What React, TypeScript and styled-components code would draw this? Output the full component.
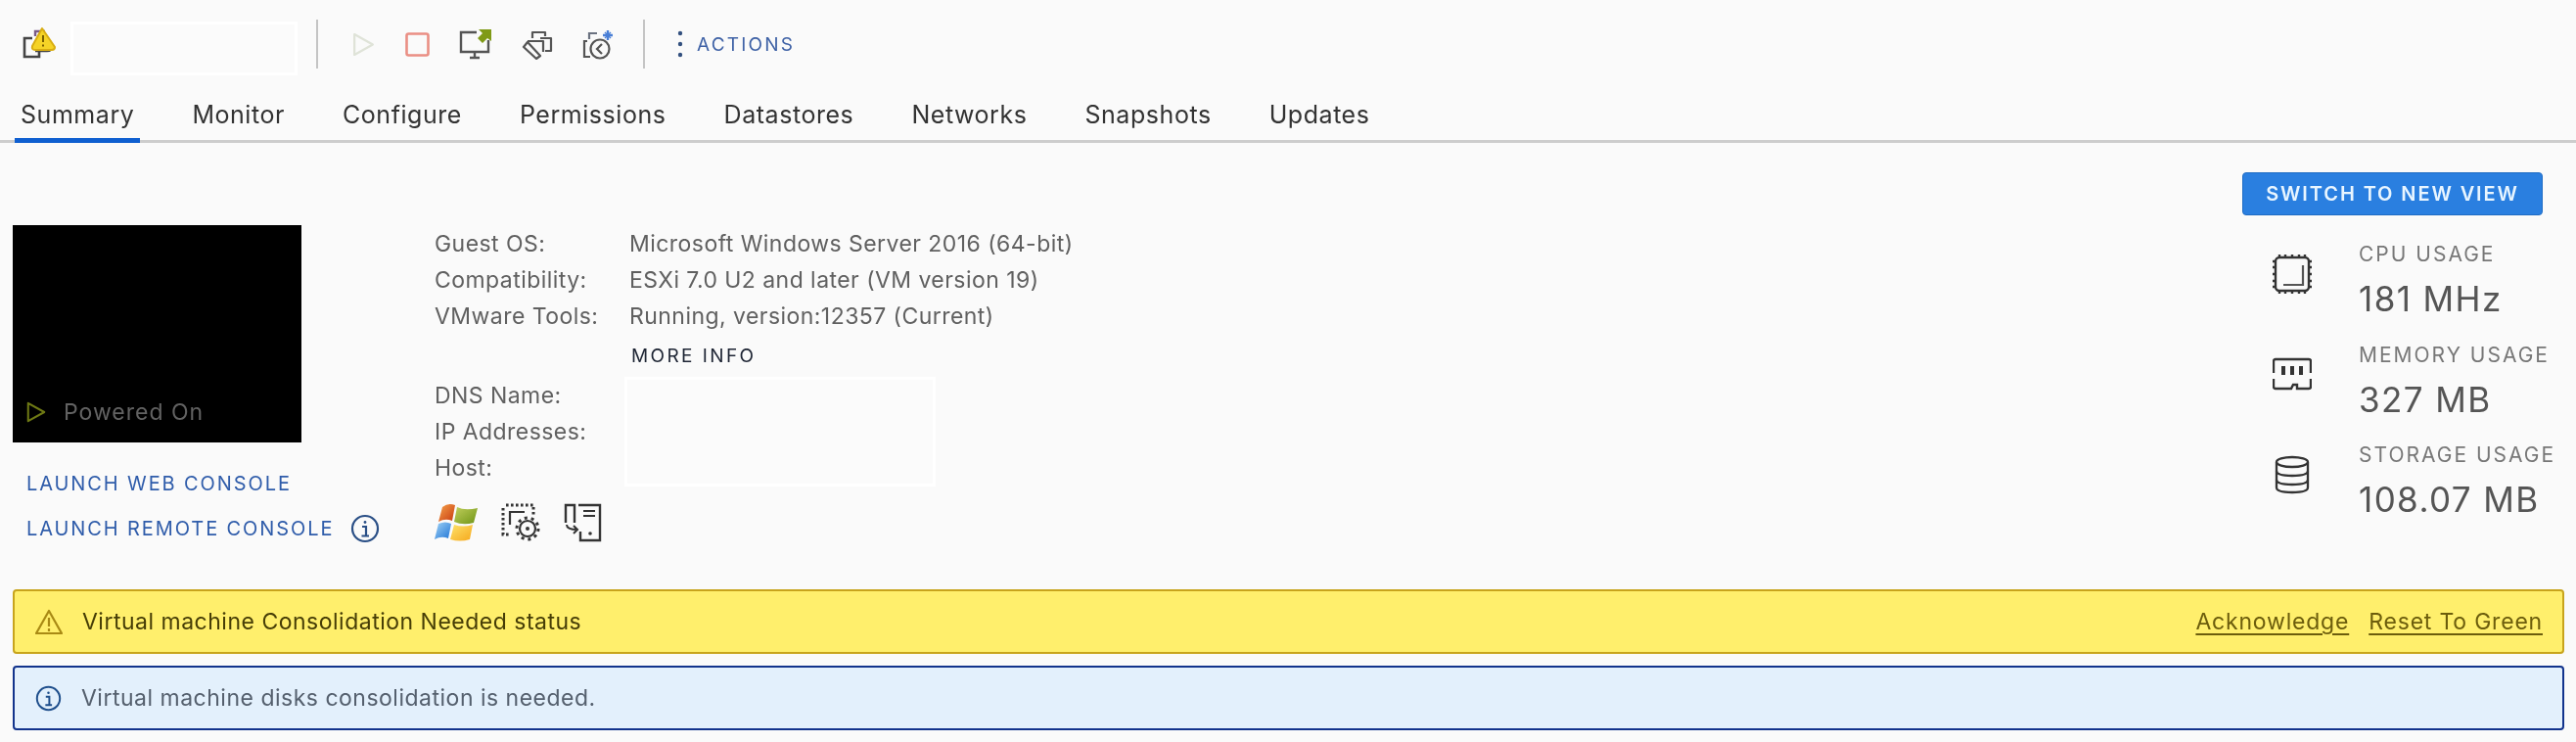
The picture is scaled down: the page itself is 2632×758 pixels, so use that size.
import React from 'react'
import styled, { createGlobalStyle } from 'styled-components'

const GlobalStyle = createGlobalStyle`
  html, body {
    margin: 0;
    padding: 0;
    background: #fafafa;
  }
  body {
    font-family: Inter, "Open Sans", sans-serif;
    color: #565656;
  }
`

// the reference is a soft video capture, so everything is slightly blurred
const Page = styled.div`
  width: 2632px;
  height: 758px;
  overflow: hidden;
  background: #fafafa;
  display: flex;
  flex-direction: column;
  filter: blur(0.5px);
`

const Toolbar = styled.div`
  display: flex;
  align-items: center;
  height: 50px;
  margin-top: 20px;
  padding-left: 22px;
`

const TitleBlank = styled.div`
  box-sizing: border-box;
  width: 232px;
  height: 55px;
  margin: 9px 19px 0 14px;
  background: #fbfbfb;
  border: 3px solid #ffffff;
`

const Separator = styled.div`
  width: 2px;
  height: 50px;
  background: #c4c4c4;
`

const ToolIcons = styled.div`
  display: flex;
  align-items: center;
  width: 332px;
  padding-left: 34px;
  box-sizing: border-box;
  gap: 30px;
`

const ActionsButton = styled.div`
  display: flex;
  align-items: center;
  gap: 14px;
  margin-left: 33px;
  font-size: 19px;
  letter-spacing: 2.2px;
  color: #3f62a6;
`

const TabBar = styled.div`
  display: flex;
  height: 73px;
  padding-left: 15px;
  gap: 47px;
  border-bottom: 3px solid #cdcdcd;
`

const Tab = styled.div<{ $active?: boolean }>`
  box-sizing: border-box;
  height: 76px;
  padding: 18px 6px 0;
  display: flex;
  align-items: center;
  font-size: 25px;
  letter-spacing: 0.55px;
  color: #333;
  box-shadow: ${p => (p.$active ? 'inset 0 -5px 0 #0f5fd0' : 'none')};
`

const Main = styled.div`
  display: flex;
  height: 456px;
  padding-left: 13px;
`

const ConsoleColumn = styled.div`
  width: 431px;
  padding-top: 84px;
  box-sizing: border-box;
`

const Thumbnail = styled.div`
  box-sizing: border-box;
  width: 295px;
  height: 222px;
  background: #000;
  display: flex;
  align-items: flex-end;
  gap: 17px;
  padding: 0 0 20px 13px;
`

const PowerState = styled.span`
  font-size: 23px;
  line-height: 22px;
  letter-spacing: 1px;
  color: #626262;
`

const ConsoleLink = styled.div`
  display: flex;
  align-items: center;
  height: 46px;
  padding-left: 14px;
  gap: 17px;
  font-size: 20px;
  letter-spacing: 1.9px;
  color: #2f5caa;
`

const ConsoleLinks = styled.div`
  margin-top: 19px;
`

const InfoColumn = styled.div`
  flex: 1;
  padding-top: 84px;
`

const InfoRow = styled.div`
  display: flex;
  height: 37px;
  align-items: center;
  font-size: 23px;
  letter-spacing: 0.45px;
  color: #606060;
`

const InfoLabel = styled.div`
  width: 199px;
`

const MoreInfo = styled.div`
  height: 44px;
  display: flex;
  align-items: center;
  padding-left: 201px;
  font-size: 19px;
  letter-spacing: 2.4px;
  color: #1d2433;
`

const HostBlock = styled.div`
  position: relative;
`

const HostBlank = styled.div`
  position: absolute;
  left: 194px;
  top: 0;
  width: 318px;
  height: 112px;
  box-sizing: border-box;
  background: #fbfbfb;
  border: 3px solid #ffffff;
`

const GuestIcons = styled.div`
  display: flex;
  align-items: center;
  gap: 23px;
  margin-top: 18px;
`

const SummaryColumn = styled.div`
  width: 341px;
  padding: 30px 34px 0 0;
  box-sizing: border-box;
`

const PrimaryButton = styled.div`
  height: 44px;
  display: flex;
  align-items: center;
  justify-content: center;
  background: #2a7fe0;
  border: 1px solid #1f6cc4;
  box-sizing: border-box;
  border-radius: 4px;
  color: #e8f5ff;
  font-size: 20px;
  font-weight: 600;
  letter-spacing: 1.9px;
  margin-bottom: 27px;
`

const Stat = styled.div`
  display: flex;
  height: 102.5px;
  padding-left: 31px;
  gap: 48px;
  white-space: nowrap;
`

const StatIcon = styled.div`
  width: 40px;
  height: 40px;
  margin-top: 13px;
`

const StatLabel = styled.div`
  height: 26px;
  line-height: 26px;
  font-size: 21px;
  letter-spacing: 2px;
  color: #777;
`

const StatValue = styled.div`
  margin-top: 10px;
  line-height: 44px;
  font-size: 35px;
  letter-spacing: 1.4px;
  color: #555;
`

const Alerts = styled.div`
  display: flex;
  flex-direction: column;
  gap: 12px;
  margin: 0 12px 0 13px;
`

const Alert = styled.div<{ $kind: 'warning' | 'info' }>`
  box-sizing: border-box;
  height: 66px;
  display: flex;
  align-items: center;
  gap: 20px;
  padding: 0 20px 0 21px;
  border-radius: 4px;
  font-size: 23px;
  letter-spacing: 0.5px;
  background: ${p => (p.$kind === 'warning' ? '#ffef6c' : '#e3f0fc')};
  border: 2px solid ${p => (p.$kind === 'warning' ? '#c8a41c' : '#12338c')};
  color: ${p => (p.$kind === 'warning' ? '#463d06' : '#55606e')};
`

const AlertText = styled.div`
  flex: 1;
`

const AlertAction = styled.a`
  font-size: 23px;
  letter-spacing: 0.8px;
  color: #6c5d0c;
  text-decoration: underline;
  text-underline-offset: 4px;
`

const PlayIcon = ({ color, size }: { color: string; size: number }) => (
  <svg width={size} height={size} viewBox="0 0 24 24" fill="none" stroke={color} strokeWidth="2.2">
    <path d="M3 2 L21 12 L3 22 Z" strokeLinejoin="round" />
  </svg>
)

const InfoIcon = ({ size, color }: { size: number; color: string }) => (
  <svg width={size} height={size} viewBox="0 0 30 30" fill="none" stroke={color} strokeWidth="2.2">
    <circle cx="15" cy="15" r="13" />
    <path d="M12 13 H16 V22 M11.5 22.5 H19" />
    <circle cx="15" cy="8.5" r="1.4" fill={color} stroke="none" />
  </svg>
)

const VmAlertIcon = () => (
  <svg width="36" height="36" viewBox="0 0 36 36" fill="none">
    <path d="M14 10 V5 H24" stroke="#7a5a86" strokeWidth="2.4" />
    <path d="M11 12 H3 V31 H18 V24 M14 25 H26 Q31 25 31 20" stroke="#444" strokeWidth="2.6" />
    <path d="M21 2 L34 21 Q34 24 31 24 H14 Q10 24 11 20 Z" fill="#f5d327" stroke="#d8ad12" strokeWidth="2" strokeLinejoin="round" />
    <path d="M22 9 V16 M22 18.5 V20.5" stroke="#7a6000" strokeWidth="2" />
  </svg>
)

const StopIcon = () => (
  <svg width="25" height="25" viewBox="0 0 25 25" fill="none">
    <rect x="1.5" y="1.5" width="22" height="22" rx="2" stroke="#ea8f84" strokeWidth="2.6" />
  </svg>
)

const OpenConsoleIcon = () => (
  <svg width="34" height="33" viewBox="0 0 34 33" fill="none">
    <path d="M18 4 H2 V24 H30 V12" stroke="#555" strokeWidth="2.4" />
    <path d="M11 30 H21 M16 24 V30" stroke="#555" strokeWidth="2.4" />
    <path d="M20 1 H33 V13 L29 10 L24 15 L19 10 L24 5 Z" fill="#7f9a16" />
  </svg>
)

const CloneIcon = () => (
  <svg width="32" height="31" viewBox="0 0 32 31" fill="none" stroke="#555" strokeWidth="2.2" strokeLinejoin="round">
    <path d="M11 9 V3 H24 V7" />
    <path d="M19 9 H30 V22 H24" />
    <path d="M6 12 H22 V23" />
    <path d="M2 18 L6 13 L19 27 L15 30 Z" />
  </svg>
)

const SnapshotIcon = () => (
  <svg width="34" height="31" viewBox="0 0 34 31" fill="none" stroke="#555" strokeWidth="2.2">
    <path d="M7 10 V4 H15" stroke="#6b7280" />
    <path d="M5 12 H2 V28 H8" />
    <circle cx="18" cy="20" r="9.5" />
    <path d="M20 15 L15 20 L20 25" />
    <path d="M26 1 V11 M21 6 H31" stroke="#4a7fd6" strokeWidth="2.4" />
    <path d="M23 3 L29 9 M29 3 L23 9" stroke="#4a7fd6" strokeWidth="1.4" />
  </svg>
)

const KebabIcon = () => (
  <svg width="6" height="28" viewBox="0 0 6 28" fill="#33507f">
    <circle cx="3" cy="3" r="2.2" />
    <circle cx="3" cy="14" r="2.2" />
    <circle cx="3" cy="25" r="2.2" />
  </svg>
)

const WindowsLogo = () => (
  <svg width="45" height="40" viewBox="0 0 45 40">
    <defs>
      <linearGradient id="winRed" x1="0" y1="0" x2="1" y2="1">
        <stop offset="0" stopColor="#f5a34a" />
        <stop offset="1" stopColor="#c8380f" />
      </linearGradient>
      <linearGradient id="winGreen" x1="0" y1="0" x2="1" y2="1">
        <stop offset="0" stopColor="#c1cf5c" />
        <stop offset="1" stopColor="#6f9416" />
      </linearGradient>
      <linearGradient id="winBlue" x1="0" y1="0" x2="1" y2="1">
        <stop offset="0" stopColor="#9fd2f5" />
        <stop offset="1" stopColor="#1f74d6" />
      </linearGradient>
      <linearGradient id="winYellow" x1="0" y1="0" x2="1" y2="1">
        <stop offset="0" stopColor="#fde26a" />
        <stop offset="1" stopColor="#f6a81c" />
      </linearGradient>
    </defs>
    <path d="M8 4 Q14 -1 21 2 L18 18 Q11 15 4 19 Z" fill="url(#winRed)" />
    <path d="M23 4 Q31 8 44 5 L40 20 Q29 23 20 19 Z" fill="url(#winGreen)" />
    <path d="M4 21 Q11 18 17 21 L14 36 Q7 33 0 37 Z" fill="url(#winBlue)" />
    <path d="M20 22 Q29 25 39 22 L36 37 Q26 40 16 37 Z" fill="url(#winYellow)" />
  </svg>
)

const VmConfigIcon = () => (
  <svg width="41" height="40" viewBox="0 0 41 40" fill="none" stroke="#333">
    <path d="M5 2 H33 V12 M2 5 V32 H10" strokeWidth="3" strokeDasharray="2.6 2.4" />
    <path d="M9 22 V9 H24" strokeWidth="2.2" />
    <circle cx="27" cy="26" r="8" strokeWidth="2.2" />
    <circle cx="27" cy="26" r="11" strokeWidth="3" strokeDasharray="3 3.9" />
    <circle cx="27" cy="26" r="2" fill="#333" stroke="none" />
  </svg>
)

const ServerMigrateIcon = () => (
  <svg width="39" height="40" viewBox="0 0 39 40" fill="none" stroke="#333" strokeWidth="2.4">
    <path d="M2 20 V2 H11 V20" />
    <path d="M15 2 H37 V38 H17 V29" />
    <path d="M20 8 H32 M20 13 H32" strokeWidth="2" />
    <circle cx="27" cy="31" r="1.8" fill="#333" stroke="none" />
    <path d="M3 22 Q3 27 14 27 M10 23 L14 27 L10 31" strokeWidth="2" />
  </svg>
)

const CpuIcon = () => (
  <svg width="40" height="40" viewBox="0 0 40 40" fill="none" stroke="#333">
    <rect x="3" y="3" width="34" height="34" rx="4" strokeWidth="2.4" />
    <path d="M31 11 V31 H11" strokeWidth="2.2" stroke="#555" />
    <path d="M7 0 V3 M13 0 V3 M20 0 V3 M27 0 V3 M33 0 V3 M7 37 V40 M13 37 V40 M20 37 V40 M27 37 V40 M33 37 V40 M0 7 H3 M0 13 H3 M0 20 H3 M0 27 H3 M0 33 H3 M37 7 H40 M37 13 H40 M37 20 H40 M37 27 H40 M37 33 H40" strokeWidth="2.4" />
  </svg>
)

const MemoryIcon = () => (
  <svg width="40" height="40" viewBox="0 0 40 40" fill="none" stroke="#333" strokeWidth="2.4">
    <path d="M1 18 V6 Q1 4 3 4 H37 Q39 4 39 6 V18 M39 24 V32 Q39 34 37 34 H25 V30 H21 L19 34 H3 Q1 34 1 32 V24" />
    <path d="M11 11 V20 M20 11 V20 M29 11 V20" strokeWidth="4" />
  </svg>
)

const StorageIcon = () => (
  <svg width="40" height="40" viewBox="0 0 40 40" fill="none" stroke="#333" strokeWidth="2.3">
    <ellipse cx="20" cy="7" rx="16" ry="5" />
    <path d="M4 7 V33 Q4 38 20 38 Q36 38 36 33 V7" />
    <path d="M4 16 Q4 21 20 21 Q36 21 36 16 M4 25 Q4 30 20 30 Q36 30 36 25" />
  </svg>
)

const WarnSmallIcon = () => (
  <svg width="28" height="27" viewBox="0 0 28 27" fill="none" stroke="#a98a14" strokeWidth="2.2">
    <path d="M14 2 L27 25 H1 Z" strokeLinejoin="round" />
    <path d="M14 9 V18 M14 20 V23" />
  </svg>
)

const tabs = ['Monitor', 'Configure', 'Permissions', 'Datastores', 'Networks', 'Snapshots', 'Updates']

const App = () => {
  return (
    <Page>
      <GlobalStyle />
      <Toolbar>
        <VmAlertIcon />
        <TitleBlank />
        <Separator />
        <ToolIcons>
          <PlayIcon color="#dfe3d8" size={25} />
          <StopIcon />
          <OpenConsoleIcon />
          <CloneIcon />
          <SnapshotIcon />
        </ToolIcons>
        <Separator />
        <ActionsButton>
          <KebabIcon />
          ACTIONS
        </ActionsButton>
      </Toolbar>

      <TabBar>
        <Tab $active>Summary</Tab>
        {tabs.map(t => (
          <Tab key={t}>{t}</Tab>
        ))}
      </TabBar>

      <Main>
        <ConsoleColumn>
          <Thumbnail>
            <PlayIcon color="#6f7a14" size={22} />
            <PowerState>Powered On</PowerState>
          </Thumbnail>
          <ConsoleLinks>
            <ConsoleLink>LAUNCH WEB CONSOLE</ConsoleLink>
            <ConsoleLink>
              LAUNCH REMOTE CONSOLE
              <InfoIcon size={30} color="#2a4f86" />
            </ConsoleLink>
          </ConsoleLinks>
        </ConsoleColumn>

        <InfoColumn>
          <InfoRow><InfoLabel>Guest OS:</InfoLabel>Microsoft Windows Server 2016 (64-bit)</InfoRow>
          <InfoRow><InfoLabel>Compatibility:</InfoLabel>ESXi 7.0 U2 and later (VM version 19)</InfoRow>
          <InfoRow><InfoLabel>VMware Tools:</InfoLabel>Running, version:12357 (Current)</InfoRow>
          <MoreInfo>MORE INFO</MoreInfo>
          <HostBlock>
            <HostBlank />
            <InfoRow>DNS Name:</InfoRow>
            <InfoRow>IP Addresses:</InfoRow>
            <InfoRow>Host:</InfoRow>
          </HostBlock>
          <GuestIcons>
            <WindowsLogo />
            <VmConfigIcon />
            <ServerMigrateIcon />
          </GuestIcons>
        </InfoColumn>

        <SummaryColumn>
          <PrimaryButton>SWITCH TO NEW VIEW</PrimaryButton>
          <Stat>
            <StatIcon><CpuIcon /></StatIcon>
            <div>
              <StatLabel>CPU USAGE</StatLabel>
              <StatValue>181 MHz</StatValue>
            </div>
          </Stat>
          <Stat>
            <StatIcon><MemoryIcon /></StatIcon>
            <div>
              <StatLabel>MEMORY USAGE</StatLabel>
              <StatValue>327 MB</StatValue>
            </div>
          </Stat>
          <Stat>
            <StatIcon><StorageIcon /></StatIcon>
            <div>
              <StatLabel>STORAGE USAGE</StatLabel>
              <StatValue>108.07 MB</StatValue>
            </div>
          </Stat>
        </SummaryColumn>
      </Main>

      <Alerts>
        <Alert $kind="warning">
          <WarnSmallIcon />
          <AlertText>Virtual machine Consolidation Needed status</AlertText>
          <AlertAction>Acknowledge</AlertAction>
          <AlertAction>Reset To Green</AlertAction>
        </Alert>
        <Alert $kind="info">
          <InfoIcon size={27} color="#1f4f8c" />
          <AlertText>Virtual machine disks consolidation is needed.</AlertText>
        </Alert>
      </Alerts>
    </Page>
  )
}

export default App
